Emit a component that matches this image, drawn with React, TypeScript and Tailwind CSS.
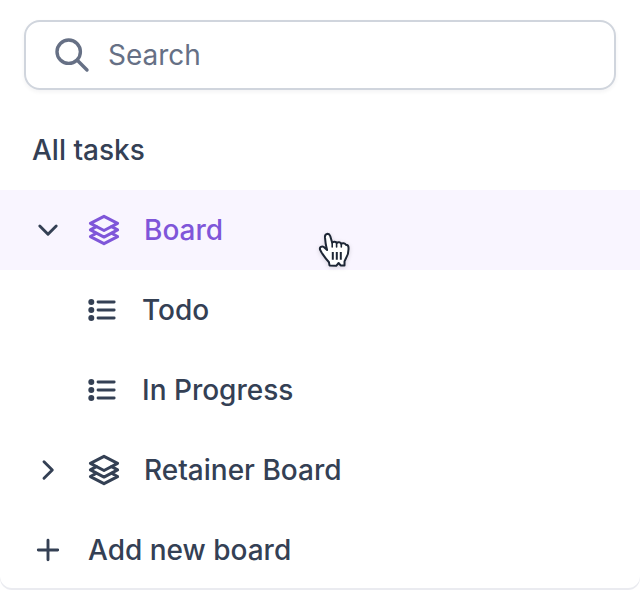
import React from "react";

function LayersIcon() {
  return (
    <svg className="size-8 shrink-0 overflow-visible" viewBox="0 0 32 32" fill="none" stroke="currentColor" strokeWidth="3" strokeLinecap="round" strokeLinejoin="round" aria-hidden="true">
      <path d="M16 2.3 29.6 9.3 16 16.5 2.4 9.3Z" />
      <path d="M8.3 12.6 2.4 15.9 16 23.1 29.6 15.9 23.7 12.6" />
      <path d="M8.3 19.3 2.4 22.6 16 29.7 29.6 22.6 23.7 19.3" />
    </svg>
  );
}

function ListIcon() {
  return (
    <svg className="size-8 shrink-0" viewBox="0 0 32 32" fill="currentColor" stroke="currentColor" strokeLinecap="round" aria-hidden="true">
      <g stroke="none">
        <circle cx="3.3" cy="8" r="3" />
        <circle cx="3.3" cy="16" r="3" />
        <circle cx="3.3" cy="24" r="3" />
      </g>
      <path strokeWidth="2.8" d="M10 8H26.2M10 16H26.2M10 24H26.2" />
    </svg>
  );
}

function Glyph({ d }: { d: string }) {
  return (
    <svg className="size-8 shrink-0" viewBox="0 0 32 32" fill="none" stroke="currentColor" strokeWidth="2.9" strokeLinecap="round" strokeLinejoin="round" aria-hidden="true">
      <path d={d} />
    </svg>
  );
}

const chevronDown = "M7.8 12 16 20.3 24.2 12";
const chevronRight = "M12 7.8 20.3 16 12 24.2";
const plus = "M16 6.3V25.7M6.3 16H25.7";

function HandPointer() {
  return (
    <svg className="pointer-events-none absolute top-10 left-1/2 h-10 w-9 overflow-visible drop-shadow-sm" viewBox="0 0 36 40" fill="white" stroke="#1d2635" strokeWidth="2" strokeLinejoin="round" strokeLinecap="round" aria-hidden="true">
      <path d="M6.2 16.3 C5.4 13.2 5.3 10 5 7.2 C4.7 3.4 9 2.7 10.2 6 L12.2 12.7 C13.2 11.1 16 11.4 16.6 13 C17.8 11.6 20.6 12 21.3 13.8 C22.4 12.8 25 13 25.9 14.8 C27.4 14.8 28.5 16 28.5 17.6 C28.8 22.5 27.9 25 26.1 28 L24.5 31.4 L24.5 35.4 L20.6 35.4 L18.6 33 L16.2 35.8 L9.5 35.4 L9 32.3 C6 29.3 4.2 26.5 1.7 22.8 L0.1 19.8 C-0.9 17 2 15.8 3.8 17 L7.1 20 Z" />
      <path strokeLinecap="butt" d="M12.8 22V29.8M16.8 22V29.8M20.8 22V29.8" />
      <path strokeWidth="1.6" d="M12.2 12.7V17M16.6 13.2V17M21.3 14V17" />
    </svg>
  );
}

const row = "flex h-20 w-full items-center text-left";

export default function App() {
  return (
    <main className="overflow-hidden rounded-b-xl bg-white pt-5 font-['Inter',sans-serif] text-[28px] leading-10 font-medium text-[#344054] shadow-[inset_0_-2px_0_#eaebf0]">
      <label className="mx-6 flex h-[70px] items-center gap-3.5 rounded-2xl border-2 border-[#d0d5dd] pr-6 pl-7 text-[#667085] shadow-[0_2px_4px_rgba(16,24,40,0.05)]">
        <svg className="size-10 shrink-0" viewBox="0 0 40 40" fill="none" stroke="currentColor" strokeWidth="3.4" strokeLinecap="round" aria-hidden="true">
          <circle cx="14.7" cy="16.7" r="11.7" />
          <path d="M23.3 25.3 33 35" />
        </svg>
        <input type="text" aria-label="Search" placeholder="Search" className="h-10 min-w-0 flex-1 bg-transparent font-normal outline-none placeholder:text-[#667085]" />
      </label>
      <nav className="pt-5">
        <ul>
          <li>
            <button className={`${row} px-8`}>All tasks</button>
          </li>
          <li>
            <div className="relative bg-[#f9f5ff]">
              <button className={`${row} px-8`} aria-expanded="true">
                <Glyph d={chevronDown} />
                <span className="flex items-center gap-6 pl-6 text-[#7f56d9]">
                  <LayersIcon />
                  Board
                </span>
              </button>
              <HandPointer />
            </div>
            <ul>
              <li>
                <button className={`${row} gap-5.5 pr-8 pl-22`}>
                  <ListIcon />
                  Todo
                </button>
              </li>
              <li>
                <button className={`${row} gap-5.5 pr-8 pl-22`}>
                  <ListIcon />
                  In Progress
                </button>
              </li>
            </ul>
          </li>
          <li>
            <button className={`${row} gap-6 px-8`} aria-expanded="false">
              <Glyph d={chevronRight} />
              <LayersIcon />
              Retainer Board
            </button>
          </li>
          <li>
            <button className={`${row} gap-6 px-8`}>
              <Glyph d={plus} />
              Add new board
            </button>
          </li>
        </ul>
      </nav>
    </main>
  );
}
